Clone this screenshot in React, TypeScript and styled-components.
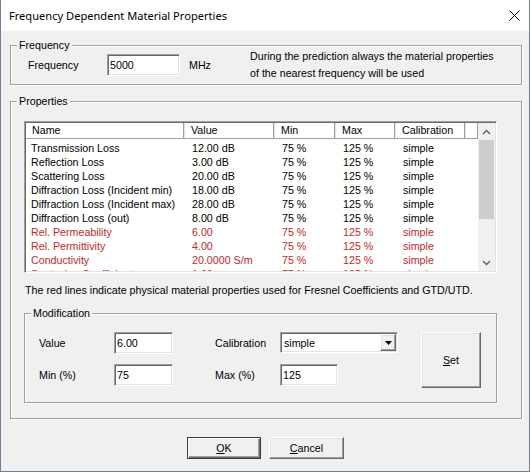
import React from "react";
import styled, { createGlobalStyle, css } from "styled-components";

const Global = createGlobalStyle`
  html, body { margin: 0; padding: 0; background: #f0f0f0; }
  body { font-family: "Liberation Sans", Arial, sans-serif; font-size: 10.7px; color: #000; }
  * { box-sizing: border-box; }
`;

const Window = styled.div`
  width: 530px;
  height: 472px;
  border: 1px solid #6b7f99;
  border-top: none;
  background: #f0f0f0;
  display: flex;
  flex-direction: column;
  overflow: hidden;
`;

const TitleBar = styled.div`
  height: 31px;
  background: #fff;
  display: flex;
  align-items: center;
  justify-content: space-between;
  padding-left: 8px;
  flex: none;
`;

const Title = styled.div`
  font-family: "Noto Sans", "Open Sans", sans-serif;
  font-size: 11.1px;
  color: #000;
`;

const CloseBox = styled.div`
  width: 30px;
  height: 31px;
  display: flex;
  align-items: center;
  justify-content: center;
`;

const Body = styled.div`
  padding: 7px 7px 0 9px;
  display: flex;
  flex-direction: column;
  flex: 1;
`;

const Group = styled.fieldset<{ $inset?: boolean }>`
  margin: 0;
  padding: 0;
  min-width: 0;
  border: 1px solid #a0a0a0;
  box-shadow: inset 1px 1px 0 #fff, 1px 1px 0 #fff;
  ${(p) =>
    p.$inset &&
    css`
      margin-left: 13px;
      width: 473px;
    `}
`;

const Legend = styled.legend`
  margin-left: 6px;
  padding: 0 2px;
  line-height: 14px;
  background: #f0f0f0;
`;

const FreqRow = styled.div`
  height: 22px;
  margin: 2px 0 8px 0;
  padding-left: 17px;
  display: flex;
  align-items: center;
`;

const Label = styled.div<{ $w: number }>`
  width: ${(p) => p.$w}px;
  flex: none;
  line-height: 14px;
`;

const Field = styled.input<{ $w: number }>`
  width: ${(p) => p.$w}px;
  height: 22px;
  flex: none;
  margin: 0;
  padding: 0 0 0 2px;
  font-family: "Liberation Sans", Arial, sans-serif;
  font-size: 10.7px;
  color: #000;
  background: #fff;
  border: 1px solid;
  border-color: #a0a0a0 #fff #fff #a0a0a0;
  box-shadow: inset 1px 1px 0 #696969, inset -1px -1px 0 #e3e3e3;
  outline: none;
`;

const Unit = styled.div`
  margin-left: 9px;
  width: 61px;
  flex: none;
`;

const Hint = styled.div`
  line-height: 17px;
  white-space: nowrap;
`;

const PropsGroup = styled(Group)`
  margin-top: 9px;
`;

const ListBox = styled.div`
  margin: 13px 0 0 13px;
  width: 473px;
  height: 152px;
  padding: 1px;
  border: 1px solid;
  border-color: #a0a0a0 #fff #fff #a0a0a0;
  box-shadow: inset 1px 1px 0 #696969, inset -1px -1px 0 #e3e3e3;
  background: #fff;
  display: flex;
  overflow: hidden;
`;

const Table = styled.div`
  flex: 1;
  display: flex;
  flex-direction: column;
  overflow: hidden;
`;

const HeaderRow = styled.div`
  height: 16px;
  display: flex;
  flex: none;
  border-bottom: 1px solid #a0a0a0;
  margin-bottom: 2px;
`;

const HeadCell = styled.div<{ $w?: number; $first?: boolean }>`
  ${(p) => (p.$w ? `width: ${p.$w}px;` : "flex: 1;")}
  flex-shrink: 0;
  height: 15px;
  line-height: 14px;
  padding-left: ${(p) => (p.$first ? 6 : 7)}px;
  border-right: 1px solid #a0a0a0;
  box-shadow: 1px 0 0 #e3e3e3;
  white-space: nowrap;
`;

const Row = styled.div<{ $red?: boolean }>`
  height: 14px;
  display: flex;
  flex: none;
  color: ${(p) => (p.$red ? "#c82828" : "#000")};
`;

const Cell = styled.div<{ $w: number; $first?: boolean }>`
  width: ${(p) => p.$w}px;
  flex: none;
  line-height: 14px;
  padding-left: ${(p) => (p.$first ? 5 : 8)}px;
  white-space: nowrap;
  overflow: hidden;
`;

const ScrollBar = styled.div`
  width: 17px;
  flex: none;
  background: #f0f0f0;
  display: flex;
  flex-direction: column;
`;

const ScrollArrow = styled.div`
  height: 17px;
  flex: none;
  display: flex;
  align-items: center;
  justify-content: center;
`;

const Track = styled.div`
  flex: 1;
  padding: 0 1px;
`;

const Thumb = styled.div`
  height: 79px;
  background: #cdcdcd;
`;

const Note = styled.div`
  margin: 10px 0 0 14px;
  line-height: 14px;
  white-space: nowrap;
`;

const ModGroup = styled(Group)`
  margin-top: 9px;
  margin-bottom: 15px;
`;

const ModGrid = styled.div`
  margin: 12px 0 16px 14px;
  display: grid;
  grid-template-columns: 75px 101px 65px 141px 60px;
  grid-template-rows: 22px 22px;
  row-gap: 10px;
  align-items: center;
`;

const Combo = styled.div`
  width: 118px;
  height: 21px;
  align-self: start;
  padding: 1px;
  border: 1px solid;
  border-color: #a0a0a0 #fff #fff #a0a0a0;
  box-shadow: inset 1px 1px 0 #696969, inset -1px -1px 0 #e3e3e3;
  background: #fff;
  display: flex;
  align-items: center;
  justify-content: space-between;
`;

const ComboText = styled.span`
  padding-left: 2px;
  line-height: 14px;
`;

const ComboButton = styled.div`
  width: 16px;
  height: 17px;
  background: #f0f0f0;
  border: 1px solid;
  border-color: #fff #696969 #696969 #fff;
  box-shadow: inset -1px -1px 0 #a0a0a0, inset 1px 1px 0 #e3e3e3;
  display: flex;
  align-items: center;
  justify-content: center;
`;

const Button = styled.button<{ $default?: boolean; $tall?: boolean }>`
  margin: 0;
  padding: 0;
  width: 75px;
  height: 22px;
  font-family: "Liberation Sans", Arial, sans-serif;
  font-size: 10.7px;
  color: #000;
  background: #f0f0f0;
  border: 1px solid;
  border-color: #fff #696969 #696969 #fff;
  box-shadow: inset -1px -1px 0 #a0a0a0, inset 1px 1px 0 #e3e3e3;
  ${(p) =>
    p.$default &&
    css`
      width: 74px;
      border-color: #3c3c3c;
      box-shadow: inset 1px 1px 0 #fff, inset -1px -1px 0 #696969, inset -2px -2px 0 #a0a0a0;
    `}
  ${(p) =>
    p.$tall &&
    css`
      width: 60px;
      height: 56px;
      grid-column: 5;
      grid-row: 1 / span 2;
      align-self: start;
    `}
  u { text-decoration: underline; text-underline-offset: 1px; }
`;

const ButtonRow = styled.div`
  margin-top: 18px;
  display: flex;
  justify-content: center;
  gap: 8px;
  padding-right: 1px;
`;

const cols = [158, 90, 61, 60, 70];

const rows: [string, string, boolean][] = [
  ["Transmission Loss", "12.00 dB", false],
  ["Reflection Loss", "3.00 dB", false],
  ["Scattering Loss", "20.00 dB", false],
  ["Diffraction Loss (Incident min)", "18.00 dB", false],
  ["Diffraction Loss (Incident max)", "28.00 dB", false],
  ["Diffraction Loss (out)", "8.00 dB", false],
  ["Rel. Permeability", "6.00", true],
  ["Rel. Permittivity", "4.00", true],
  ["Conductivity", "20.0000 S/m", true],
  ["Scattering Coefficient", "1.00", true],
];

const Chevron = ({ up }: { up?: boolean }) => (
  <svg width="9" height="6" viewBox="0 0 9 6">
    <polyline
      points={up ? "1,5 4.5,1.5 8,5" : "1,1 4.5,4.5 8,1"}
      fill="none"
      stroke="#606060"
      strokeWidth="1.4"
    />
  </svg>
);

export default function App() {
  return (
    <>
      <Global />
      <Window>
        <TitleBar>
          <Title>Frequency Dependent Material Properties</Title>
          <CloseBox>
            <svg width="11" height="11" viewBox="0 0 11 11">
              <path d="M0.5 0.5 L10.5 10.5 M10.5 0.5 L0.5 10.5" stroke="#000" strokeWidth="1" />
            </svg>
          </CloseBox>
        </TitleBar>
        <Body>
          <Group>
            <Legend>Frequency</Legend>
            <FreqRow>
              <Label $w={79}>Frequency</Label>
              <Field $w={73} value="5000" readOnly />
              <Unit>MHz</Unit>
              <Hint>
                During the prediction always the material properties
                <br />
                of the nearest frequency will be used
              </Hint>
            </FreqRow>
          </Group>

          <PropsGroup>
            <Legend>Properties</Legend>
            <ListBox>
              <Table>
                <HeaderRow>
                  <HeadCell $w={cols[0]} $first>Name</HeadCell>
                  <HeadCell $w={cols[1]}>Value</HeadCell>
                  <HeadCell $w={cols[2]}>Min</HeadCell>
                  <HeadCell $w={cols[3]}>Max</HeadCell>
                  <HeadCell $w={cols[4]}>Calibration</HeadCell>
                  <HeadCell />
                </HeaderRow>
                {rows.map(([name, value, red]) => (
                  <Row key={name} $red={red}>
                    <Cell $w={cols[0]} $first>{name}</Cell>
                    <Cell $w={cols[1]}>{value}</Cell>
                    <Cell $w={cols[2]}>75 %</Cell>
                    <Cell $w={cols[3]}>125 %</Cell>
                    <Cell $w={cols[4]}>simple</Cell>
                  </Row>
                ))}
              </Table>
              <ScrollBar>
                <ScrollArrow>
                  <Chevron up />
                </ScrollArrow>
                <Track>
                  <Thumb />
                </Track>
                <ScrollArrow>
                  <Chevron />
                </ScrollArrow>
              </ScrollBar>
            </ListBox>
            <Note>
              The red lines indicate physical material properties used for Fresnel Coefficients and GTD/UTD.
            </Note>
            <ModGroup $inset>
              <Legend>Modification</Legend>
              <ModGrid>
                <Label $w={75}>Value</Label>
                <Field $w={59} value="6.00" readOnly />
                <Label $w={65}>Calibration</Label>
                <Combo>
                  <ComboText>simple</ComboText>
                  <ComboButton>
                    <svg width="7" height="4" viewBox="0 0 7 4">
                      <polygon points="0,0 7,0 3.5,4" fill="#000" />
                    </svg>
                  </ComboButton>
                </Combo>
                <Button $tall>
                  <u>S</u>et
                </Button>
                <Label $w={75}>Min (%)</Label>
                <Field $w={59} value="75" readOnly />
                <Label $w={65}>Max (%)</Label>
                <Field $w={58} value="125" readOnly />
              </ModGrid>
            </ModGroup>
          </PropsGroup>

          <ButtonRow>
            <Button $default>
              <u>O</u>K
            </Button>
            <Button>
              <u>C</u>ancel
            </Button>
          </ButtonRow>
        </Body>
      </Window>
    </>
  );
}
